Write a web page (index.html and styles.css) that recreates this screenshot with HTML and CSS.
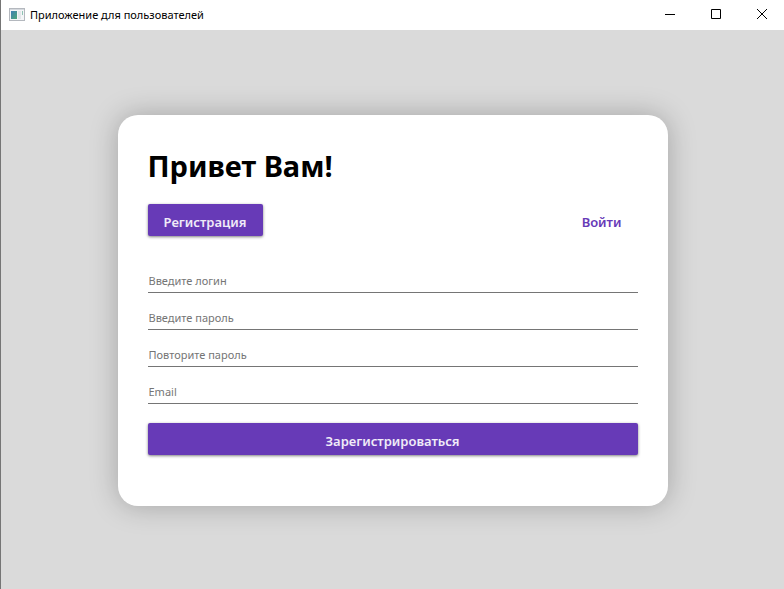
FILE: index.html
```html
<!DOCTYPE html>
<html lang="ru">
<head>
<meta charset="utf-8">
<title>Приложение для пользователей</title>
<link rel="stylesheet" href="styles.css">
</head>
<body>
<div class="window">
  <header class="titlebar">
    <svg class="app-icon" width="16" height="14" viewBox="0 0 16 14" aria-hidden="true">
      <defs>
        <linearGradient id="pane" x1="0" y1="0" x2="1" y2="1">
          <stop offset="0" stop-color="#3f7fb5"/>
          <stop offset="1" stop-color="#4fa878"/>
        </linearGradient>
      </defs>
      <rect x="0.5" y="0.5" width="15" height="12" fill="#f4f5f7" stroke="#b4b8be"/>
      <rect x="1" y="1" width="14" height="1" fill="#d5d9de"/>
      <rect x="2" y="3" width="6" height="8" fill="url(#pane)"/>
      <rect x="9" y="3" width="3" height="8" fill="#e3e7ea"/>
      <rect x="13" y="3" width="1" height="4" fill="#8fc4b4"/>
    </svg>
    <span class="title">Приложение для пользователей</span>
    <div class="controls">
      <button class="control" type="button" aria-label="Свернуть">
        <svg width="10" height="10" viewBox="0 0 10 10"><path d="M0 5.5H10"/></svg>
      </button>
      <button class="control" type="button" aria-label="Развернуть">
        <svg width="10" height="10" viewBox="0 0 10 10"><path d="M0.5 0.5H9.5V9.5H0.5Z"/></svg>
      </button>
      <button class="control" type="button" aria-label="Закрыть">
        <svg width="10" height="10" viewBox="0 0 10 10"><path d="M0 0L10 10M10 0L0 10"/></svg>
      </button>
    </div>
  </header>
  <main class="content">
    <section class="card">
      <h1 class="heading">Привет Вам!</h1>
      <nav class="switch">
        <button class="button raised" type="button">Регистрация</button>
        <button class="button flat" type="button">Войти</button>
      </nav>
      <form class="form">
        <input class="field" type="text" placeholder="Введите логин" aria-label="Введите логин">
        <input class="field" type="password" placeholder="Введите пароль" aria-label="Введите пароль">
        <input class="field" type="password" placeholder="Повторите пароль" aria-label="Повторите пароль">
        <input class="field" type="email" placeholder="Email" aria-label="Email">
        <button class="button raised submit" type="button">Зарегистрироваться</button>
      </form>
    </section>
  </main>
</div>
</body>
</html>
```
FILE: styles.css
```css
* {
  box-sizing: border-box;
}

body {
  margin: 0;
  font-family: "Noto Sans", "Open Sans", sans-serif;
  color: #000;
}

.window {
  display: flex;
  flex-direction: column;
  min-height: 100vh;
  border-left: 1px solid #757575;
  background: #dadada;
}

.titlebar {
  display: flex;
  align-items: center;
  height: 30px;
  padding-left: 8px;
  background: #fff;
}

.title {
  flex: 1;
  margin-left: 5px;
  font-size: 11px;
  line-height: 16px;
}

.controls {
  display: flex;
  align-self: stretch;
}

.control {
  display: flex;
  align-items: center;
  justify-content: center;
  width: 46px;
  padding: 0 0 2px 2px;
  border: 0;
  background: transparent;
}

.control path {
  fill: none;
  stroke: #000;
  stroke-width: 1;
}

.content {
  display: flex;
  flex: 1;
  align-items: center;
  justify-content: center;
  padding: 22px 20px 20px;
}

.card {
  width: 100%;
  max-width: 550px;
  padding: 30px 30px 51px;
  border-radius: 20px;
  background: #fff;
  box-shadow: 0 0 28px rgba(0, 0, 0, 0.25);
}

.heading {
  margin: 0;
  font-size: 29px;
  font-weight: 700;
  line-height: 42px;
}

.switch {
  display: flex;
  justify-content: space-between;
  margin: 17px 0 28px;
}

.button {
  height: 32px;
  padding: 3px 16px 0;
  border: 0;
  border-radius: 2px;
  font-family: inherit;
  font-size: 13px;
  font-weight: 600;
  line-height: 20px;
}

.raised {
  background: #673ab7;
  color: #f0ebf8;
  box-shadow: 0 1px 3px rgba(0, 0, 0, 0.5);
}

.flat {
  background: transparent;
  color: #673ab7;
}

.form {
  display: flex;
  flex-direction: column;
  gap: 8px;
}

.field {
  width: 100%;
  height: 29px;
  padding: 5px 1px 0;
  border: 0;
  border-bottom: 1px solid #757575;
  outline: 0;
  background: transparent;
  font-family: inherit;
  font-size: 11px;
}

.field::placeholder {
  color: #757575;
  opacity: 1;
}

.submit {
  margin-top: 11px;
}
```
